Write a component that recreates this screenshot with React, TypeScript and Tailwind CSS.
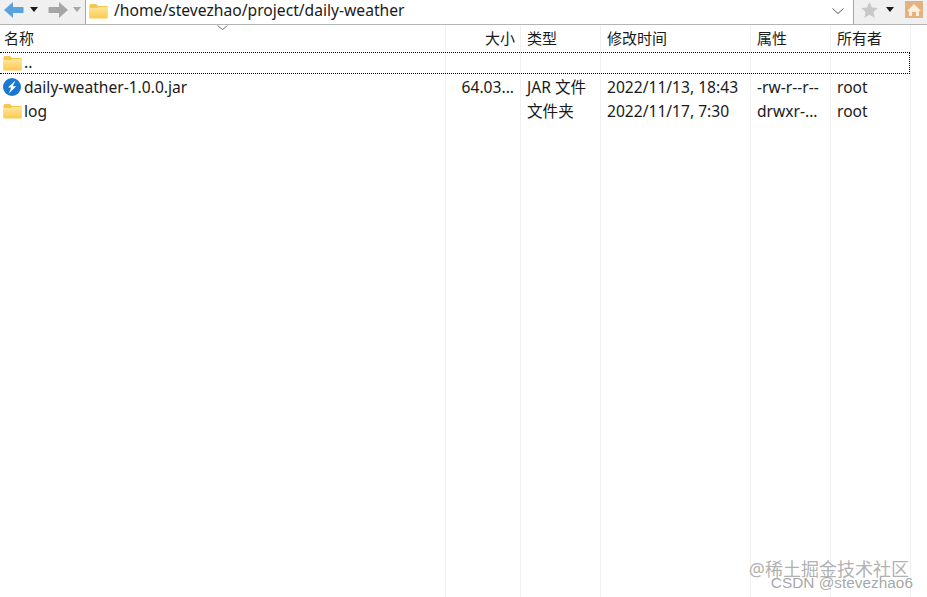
import { ReactNode } from "react";

const font = "font-['Noto_Sans','Noto_Sans_CJK_SC',sans-serif]";
const gridCols = "grid grid-cols-[446px_75px_80px_150px_80px_80px_16px]";

const Folder = ({ w = 19 }: { w?: number }) => (
  <svg width={w} height={(w * 16) / 19} viewBox="0 0 19 16" className="shrink-0">
    <defs>
      <linearGradient id="fold" x1="0" y1="0" x2="0" y2="1">
        <stop offset="0" stopColor="#ffe79a" />
        <stop offset="1" stopColor="#fbc94e" />
      </linearGradient>
    </defs>
    <path d="M0.5 2.5 Q0.5 1 2 1 H7 L9 3 H18.5 V15 H0.5 Z" fill="#f6c64f" />
    <path d="M0.5 5 H8 L9.5 4 H18.5 V15.5 H0.5 Z" fill="url(#fold)" />
  </svg>
);

const JarIcon = () => (
  <svg width="18" height="18" viewBox="0 0 18 18" className="shrink-0">
    <circle cx="9" cy="9" r="9" fill="#1a78d0" />
    <path d="M12.4 2.6 L5 9.4 H8.2 L5.8 15.4 L13.2 8.2 H9.8 Z" fill="#ffffff" />
  </svg>
);

const Caret = ({ color }: { color: string }) => (
  <svg width="8" height="5" viewBox="0 0 8 5">
    <path d="M0 0 H8 L4 5 Z" fill={color} />
  </svg>
);

const Cell = ({ children, className = "" }: { children?: ReactNode; className?: string }) => (
  <div className={`border-r border-[#f0f0f0] px-[6px] whitespace-nowrap overflow-hidden flex items-center ${className}`}>
    {children}
  </div>
);

const Toolbar = () => (
  <div className="flex h-[25px] bg-[#f0f0f0] border-b border-[#b4b4b4]">
    <div className="w-[86px] flex items-center pl-[4px] pb-[5px] border-r border-[#a8a8a8]">
      <svg width="20" height="16" viewBox="0 0 20 16">
        <path d="M0 8 L9 0 V5 H19.5 V11 H9 V16 Z" fill="#5aa3dc" />
      </svg>
      <div className="ml-[6px]"><Caret color="#1a1a1a" /></div>
      <svg width="20" height="16" viewBox="0 0 20 16" className="ml-[10px]">
        <path d="M20 8 L11 0 V5 H0.5 V11 H11 V16 Z" fill="#a6a6a6" />
      </svg>
      <div className="ml-[5px]"><Caret color="#a6a6a6" /></div>
    </div>
    <div className="w-[768px] bg-white flex items-center pl-[3px] pr-[9px] border-r border-[#a8a8a8]">
      <div className="mb-[3px]"><Folder /></div>
      <span className="ml-[6px] mb-[2px] text-[15.65px] leading-none text-[#1a1a1a] flex-1">/home/stevezhao/project/daily-weather</span>
      <svg width="12" height="6" viewBox="0 0 12 6" className="mb-[2px]">
        <path d="M0.5 0.5 L6 5.5 L11.5 0.5" fill="none" stroke="#555" strokeWidth="1" />
      </svg>
    </div>
    <div className="flex-1 flex items-center pl-[7px] pb-[5px]">
      <svg width="17" height="16" viewBox="0 0 24 23">
        <path d="M12 0 L15.5 8 L24 8.8 L17.6 14.4 L19.5 23 L12 18.5 L4.5 23 L6.4 14.4 L0 8.8 L8.5 8 Z" fill="#c8c8c8" />
      </svg>
      <div className="ml-[8px]"><Caret color="#1a1a1a" /></div>
      <svg width="18" height="17" viewBox="0 0 18 17" className="ml-[11px]">
        <rect width="18" height="17" fill="#e3b27f" />
        <path d="M9 3 L16 10 H14 V15 H11 V11 H7 V15 H4 V10 H2 Z" fill="#fbeedd" />
      </svg>
    </div>
  </div>
);

const Header = () => (
  <div className={`${gridCols} h-[27px] text-[15px] text-[#1a1a1a]`}>
    <Cell className="relative !px-[4px]">
      名称
      <svg width="11" height="5" viewBox="0 0 11 5" className="absolute left-[217px] top-0">
        <path d="M0.5 0.5 L5.5 4.5 L10.5 0.5" fill="none" stroke="#777" strokeWidth="1" />
      </svg>
    </Cell>
    <Cell className="justify-end !pr-[5px]">大小</Cell>
    <Cell>类型</Cell>
    <Cell>修改时间</Cell>
    <Cell>属性</Cell>
    <Cell>所有者</Cell>
    <div />
  </div>
);

type FileRow = { icon: ReactNode; name: string; size: string; type: string; time: string; attr: string; owner: string };

const files: FileRow[] = [
  { icon: <JarIcon />, name: "daily-weather-1.0.0.jar", size: "64.03...", type: "JAR 文件", time: "2022/11/13, 18:43", attr: "-rw-r--r--", owner: "root" },
  { icon: <Folder />, name: "log", size: "", type: "文件夹", time: "2022/11/17, 7:30", attr: "drwxr-...", owner: "root" },
];

const Row = ({ file }: { file: FileRow }) => (
  <div className={`${gridCols} h-[24px] text-[15.6px] text-[#1a1a1a]`}>
    <Cell className="!px-0 !pl-[3px]">
      <span className="w-[18px] flex justify-center shrink-0 mb-[2px]">{file.icon}</span>
      <span className="ml-[3px]">{file.name}</span>
    </Cell>
    <Cell className="justify-end">{file.size}</Cell>
    <Cell>{file.type}</Cell>
    <Cell>{file.time}</Cell>
    <Cell>{file.attr}</Cell>
    <Cell>{file.owner}</Cell>
    <div />
  </div>
);

const ParentRow = () => (
  <div className="relative">
    <div className={`${gridCols} h-[22px] text-[15.6px] text-[#1a1a1a]`}>
      <Cell className="!px-0 !pl-[3px]">
        <span className="w-[18px] flex justify-center shrink-0"><Folder /></span>
        <span className="ml-[3px]">..</span>
      </Cell>
      <Cell />
      <Cell />
      <Cell />
      <Cell />
      <Cell />
      <div />
    </div>
    <div className="absolute left-0 top-0 w-[910px] h-[22px] border border-dotted border-black border-l-0" />
  </div>
);

export default function App() {
  return (
    <div className={`relative w-[927px] h-[597px] overflow-hidden bg-white flex flex-col ${font}`}>
      <Toolbar />
      <Header />
      <ParentRow />
      <div className={`${gridCols} h-[2px]`}>
        <Cell /><Cell /><Cell /><Cell /><Cell /><Cell />
      </div>
      {files.map((f) => (
        <Row key={f.name} file={f} />
      ))}
      <div className={`${gridCols} flex-1`}>
        <Cell /><Cell /><Cell /><Cell /><Cell /><Cell />
      </div>
      <div className="absolute right-[18px] bottom-[19px] text-[18px] leading-none text-[#a8a8a8]/90 whitespace-nowrap">@稀土掘金技术社区</div>
      <div className="absolute right-[14px] bottom-[7px] text-[15.4px] leading-none text-[#9c9c9c]/90 whitespace-nowrap font-['Liberation_Sans',sans-serif]">CSDN @stevezhao6</div>
    </div>
  );
}
